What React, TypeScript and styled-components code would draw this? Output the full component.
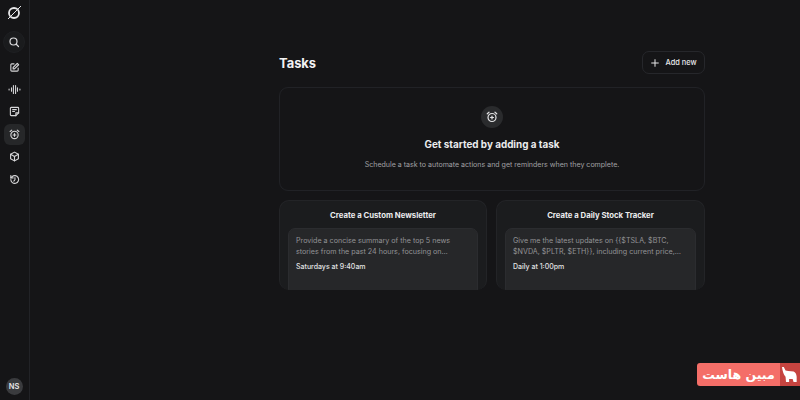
import styled, { createGlobalStyle } from 'styled-components'
import type { ReactNode } from 'react'

const SUGGESTIONS = [
  {
    title: 'Create a Custom Newsletter',
    prompt: 'Provide a concise summary of the top 5 news stories from the past 24 hours, focusing on…',
    schedule: 'Saturdays at 9:40am',
  },
  {
    title: 'Create a Daily Stock Tracker',
    prompt: 'Give me the latest updates on {{$TSLA, $BTC, $NVDA, $PLTR, $ETH}}, including current price,…',
    schedule: 'Daily at 1:00pm',
  },
]

const GlobalStyle = createGlobalStyle`
  html, body {
    margin: 0;
    height: 100%;
    background: #151517;
  }
  body {
    font-family: Inter, "Liberation Sans", sans-serif;
    color: #f1f1f2;
    overflow: hidden;
  }
  #root {
    height: 100%;
  }
`

const Page = styled.div`
  display: flex;
  height: 400px;
  width: 800px;
`

const Sidebar = styled.nav`
  width: 28px;
  padding: 5px 1px 0 0;
  flex-shrink: 0;
  border-right: 1px solid #222327;
  display: flex;
  flex-direction: column;
  align-items: center;
`

const Logo = styled.div`
  width: 18px;
  height: 17px;
  display: flex;
  color: #e6e6e8;
  margin-bottom: 9px;
`

const SearchButton = styled.div`
  width: 22px;
  height: 22px;
  border-radius: 50%;
  background: #1a1b1d;
  border: 1px solid #1e1f22;
  box-sizing: border-box;
  display: flex;
  align-items: center;
  justify-content: center;
  color: #dcdcde;
  margin-bottom: 2.2px;
`

const NavItem = styled.div<{ $active?: boolean }>`
  width: 21px;
  height: 21px;
  margin-top: 1.4px;
  border-radius: 6px;
  display: flex;
  align-items: center;
  justify-content: center;
  color: #d6d6d8;
  background: ${(p) => (p.$active ? '#262729' : 'transparent')};
`

const Avatar = styled.div`
  margin-top: auto;
  margin-bottom: 5px;
  width: 17px;
  height: 17px;
  border-radius: 50%;
  background: #3a3b3e;
  color: #e8e8ea;
  font-size: 7.5px;
  font-weight: 600;
  display: flex;
  align-items: center;
  justify-content: center;
`

const Main = styled.main`
  flex: 1;
  padding: 51px 95px 0 249px;
`

const Header = styled.header`
  display: flex;
  align-items: center;
  justify-content: space-between;
  height: 23px;
  margin-bottom: 13px;
`

const Title = styled.h1`
  margin: 0;
  padding-top: 1px;
  font-size: 12.9px;
  font-weight: 650;
  color: #f2f2f3;
`

const AddButton = styled.button`
  height: 23px;
  width: 63px;
  padding: 0;
  display: flex;
  align-items: center;
  justify-content: center;
  gap: 5px;
  font-family: inherit;
  font-size: 7.4px;
  font-weight: 500;
  color: #e8e8ea;
  background: transparent;
  border: 1px solid #26272b;
  border-radius: 7px;
`

const EmptyCard = styled.section`
  height: 104px;
  box-sizing: border-box;
  border: 1px solid #212226;
  border-radius: 9px;
  display: flex;
  flex-direction: column;
  align-items: center;
  padding-top: 18px;
  margin-bottom: 9px;
`

const EmptyIcon = styled.div`
  width: 22px;
  height: 22px;
  border-radius: 50%;
  background: #2a2b2d;
  color: #e4e4e6;
  display: flex;
  align-items: center;
  justify-content: center;
  margin-bottom: 9px;
`

const EmptyTitle = styled.h2`
  margin: 0 0 8px;
  font-size: 9.9px;
  line-height: 14px;
  font-weight: 650;
  color: #ececee;
`

const EmptyText = styled.p`
  margin: 0;
  font-size: 7.05px;
  line-height: 12px;
  color: #a0a0a3;
`

const SuggestionGrid = styled.div`
  display: grid;
  grid-template-columns: 208px 209px;
  gap: 9px;
`

const SuggestionCard = styled.article`
  height: 90px;
  box-sizing: border-box;
  background: #1b1c1e;
  border: 1px solid #232427;
  border-bottom: none;
  border-radius: 10px;
  padding: 0 8px;
  overflow: hidden;
`

const SuggestionTitle = styled.h3`
  margin: 0;
  height: 26px;
  padding-top: 1px;
  display: flex;
  align-items: center;
  justify-content: center;
  font-size: 7.75px;
  font-weight: 650;
  color: #ececee;
`

const PromptBox = styled.div`
  height: 70px;
  box-sizing: border-box;
  background: #262729;
  border: 1px solid #2b2c2f;
  border-radius: 7px;
  padding: 6px 7px;
`

const PromptText = styled.p`
  margin: 0 0 4px;
  font-size: 7.15px;
  line-height: 11px;
  color: #939396;
`

const Schedule = styled.div`
  font-size: 7px;
  line-height: 11px;
  font-weight: 500;
  color: #e2e2e4;
`

const Watermark = styled.div`
  position: absolute;
  left: 697px;
  top: 363px;
  width: 103px;
  height: 23px;
  display: flex;
`

const WatermarkLabel = styled.div`
  width: 83px;
  background: #f46e68;
  border-radius: 3px 0 0 3px;
  color: #fff;
  font-family: "DejaVu Sans", sans-serif;
  font-size: 12.5px;
  font-weight: 700;
  direction: rtl;
  display: flex;
  align-items: center;
  justify-content: center;
`

const WatermarkMark = styled.div`
  flex: 1;
  background: #c64440;
  color: #fff;
  display: flex;
  align-items: center;
  justify-content: center;
`

function Icon({ size = 11, width = 2.4, children }: { size?: number; width?: number; children: ReactNode }) {
  return (
    <svg
      width={size}
      height={size}
      viewBox="0 0 24 24"
      fill="none"
      stroke="currentColor"
      strokeWidth={width}
      strokeLinecap="round"
      strokeLinejoin="round"
    >
      {children}
    </svg>
  )
}

function AlarmPaths() {
  return (
    <>
      <circle cx="12" cy="13" r="8" />
      <path d="M2.5 5.5l3.5-3M21.5 5.5l-3.5-3M12 10v6M9 13h6" />
    </>
  )
}

export default function App() {
  return (
    <Page>
      <GlobalStyle />
      <Sidebar>
        <Logo>
          <svg width="18" height="17" viewBox="0 0 18 17" fill="none" stroke="currentColor">
            <circle cx="9" cy="8" r="5" strokeWidth="1.8" />
            <path d="M3 14L16 1" strokeWidth="1" />
          </svg>
        </Logo>
        <SearchButton>
          <Icon size={12}>
            <circle cx="11" cy="11" r="7" />
            <path d="M16.5 16.5L21 21" />
          </Icon>
        </SearchButton>
        <NavItem>
          <Icon>
            <path d="M11 4H6a2 2 0 0 0-2 2v12a2 2 0 0 0 2 2h12a2 2 0 0 0 2-2v-5" />
            <path d="M9 15v-3l9-9 3 3-9 9z" />
          </Icon>
        </NavItem>
        <NavItem>
          <Icon size={13} width={2}>
            <path d="M2 11v2M6.5 9v6M10 4.500v15M14 4.500v15M17.500 9v6M22 11v2" />
          </Icon>
        </NavItem>
        <NavItem>
          <Icon>
            <path d="M5 3h14a2 2 0 0 1 2 2v10l-6 6H5a2 2 0 0 1-2-2V5a2 2 0 0 1 2-2z" />
            <path d="M8 8h8M8 12h4M15 21v-6h6" />
          </Icon>
        </NavItem>
        <NavItem $active>
          <Icon>
            <AlarmPaths />
          </Icon>
        </NavItem>
        <NavItem>
          <Icon>
            <path d="M12 2.5l8.5 4.8v9.4L12 21.5l-8.5-4.8V7.3z" />
            <path d="M3.5 7.3L12 12l8.5-4.7M12 12v9.5" />
          </Icon>
        </NavItem>
        <NavItem>
          <Icon>
            <path d="M4 12a8.5 8.5 0 1 0 2.7-6.2L4 8.3" />
            <path d="M4 3.5v5h5M13 8v4.5l-2.5 3" />
          </Icon>
        </NavItem>
        <Avatar>NS</Avatar>
      </Sidebar>
      <Main>
        <Header>
          <Title>Tasks</Title>
          <AddButton>
            <Icon size={10}>
              <path d="M12 4v16M4 12h16" />
            </Icon>
            Add new
          </AddButton>
        </Header>
        <EmptyCard>
          <EmptyIcon>
            <Icon size={12}>
              <AlarmPaths />
            </Icon>
          </EmptyIcon>
          <EmptyTitle>Get started by adding a task</EmptyTitle>
          <EmptyText>Schedule a task to automate actions and get reminders when they complete.</EmptyText>
        </EmptyCard>
        <SuggestionGrid>
          {SUGGESTIONS.map((s) => (
            <SuggestionCard key={s.title}>
              <SuggestionTitle>{s.title}</SuggestionTitle>
              <PromptBox>
                <PromptText>{s.prompt}</PromptText>
                <Schedule>{s.schedule}</Schedule>
              </PromptBox>
            </SuggestionCard>
          ))}
        </SuggestionGrid>
      </Main>
      <Watermark>
        <WatermarkLabel>مبین هاست</WatermarkLabel>
        <WatermarkMark>
          <svg width="16" height="16" viewBox="0 0 18 18" fill="currentColor">
            <path d="M0 0h2l2 4q2 0 3 .5l6 .5q3 1 3.5 6v6H13l-1-3.5H8V17H4.500L4 11Q1 8 0 0z" />
          </svg>
        </WatermarkMark>
      </Watermark>
    </Page>
  )
}
